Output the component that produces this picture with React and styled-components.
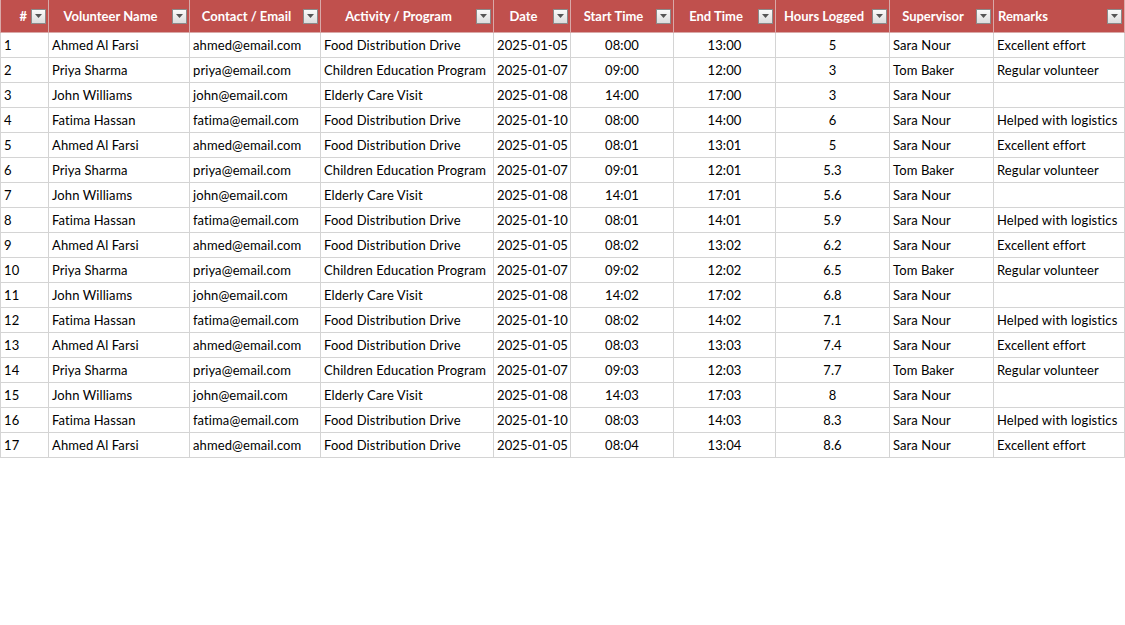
import React from 'react';
import styled, { createGlobalStyle } from 'styled-components';

const Global = createGlobalStyle`
  body { margin: 0; background: #fff; font-family: Lato, "Liberation Sans", sans-serif; }
`;

const Table = styled.table`
  border-collapse: collapse;
  table-layout: fixed;
  width: 1124px;
  font-size: 13px;
  color: #000;
`;

const Th = styled.th`
  background: #c0504d;
  color: #fff;
  font-weight: 700;
  height: 32px;
  padding: 0 2px 0 4px;
  border: 1px solid #d9a9a8;
  border-top: none;
  white-space: nowrap;
`;

const HeadInner = styled.div`
  display: flex;
  align-items: center;
  gap: 4px;
`;

const Label = styled.span`
  flex: 1;
  text-align: ${p => p.$align};
`;

const Filter = styled.span`
  width: 15px;
  height: 15px;
  flex: none;
  box-sizing: border-box;
  border: 1px solid #8a8a8a;
  background: linear-gradient(#fafafa, #dcdcdc);
  display: flex;
  align-items: center;
  justify-content: center;
`;

const Td = styled.td`
  height: 24px;
  padding: 0 3px;
  border: 1px solid #d4d4d4;
  text-align: ${p => p.$align || 'left'};
  white-space: nowrap;
  overflow: hidden;
  letter-spacing: 0.1px;
`;

const cols = [
  ['#', 48, 'right'], ['Volunteer Name', 141, 'center'], ['Contact / Email', 131, 'center'],
  ['Activity / Program', 173, 'center'], ['Date', 77, 'center'], ['Start Time', 103, 'center'],
  ['End Time', 102, 'center'], ['Hours Logged', 114, 'center'], ['Supervisor', 104, 'center'],
  ['Remarks', 131, 'left'],
];

const people = [
  ['Ahmed Al Farsi', 'ahmed@email.com', 'Food Distribution Drive', '2025-01-05', 8, 13, 'Sara Nour', 'Excellent effort'],
  ['Priya Sharma', 'priya@email.com', 'Children Education Program', '2025-01-07', 9, 12, 'Tom Baker', 'Regular volunteer'],
  ['John Williams', 'john@email.com', 'Elderly Care Visit', '2025-01-08', 14, 17, 'Sara Nour', ''],
  ['Fatima Hassan', 'fatima@email.com', 'Food Distribution Drive', '2025-01-10', 8, 14, 'Sara Nour', 'Helped with logistics'],
];
const hours = ['5', '3', '3', '6', '5', '5.3', '5.6', '5.9', '6.2', '6.5', '6.8', '7.1', '7.4', '7.7', '8', '8.3', '8.6'];
const pad = n => String(n).padStart(2, '0');

const rows = hours.map((h, i) => {
  const p = people[i % 4];
  const m = Math.floor(i / 4);
  return [String(i + 1), p[0], p[1], p[2], p[3], `${pad(p[4])}:${pad(m)}`, `${pad(p[5])}:${pad(m)}`, h, p[6], p[7]];
});

const aligns = ['left', 'left', 'left', 'left', 'center', 'center', 'center', 'center', 'left', 'left'];

const Arrow = () => (
  <svg width="9" height="6" viewBox="0 0 9 6"><path d="M1 1h7L4.5 5z" fill="#555" /></svg>
);

export default function App() {
  return (
    <>
      <Global />
      <Table>
        <colgroup>{cols.map(([, w], i) => <col key={i} style={{ width: w }} />)}</colgroup>
        <thead>
          <tr>
            {cols.map(([t, , a]) => (
              <Th key={t}>
                <HeadInner>
                  <Label $align={a}>{t}</Label>
                  <Filter><Arrow /></Filter>
                </HeadInner>
              </Th>
            ))}
          </tr>
        </thead>
        <tbody>
          {rows.map((r, i) => (
            <tr key={i}>{r.map((c, j) => <Td key={j} $align={aligns[j]}>{c}</Td>)}</tr>
          ))}
        </tbody>
      </Table>
    </>
  );
}
